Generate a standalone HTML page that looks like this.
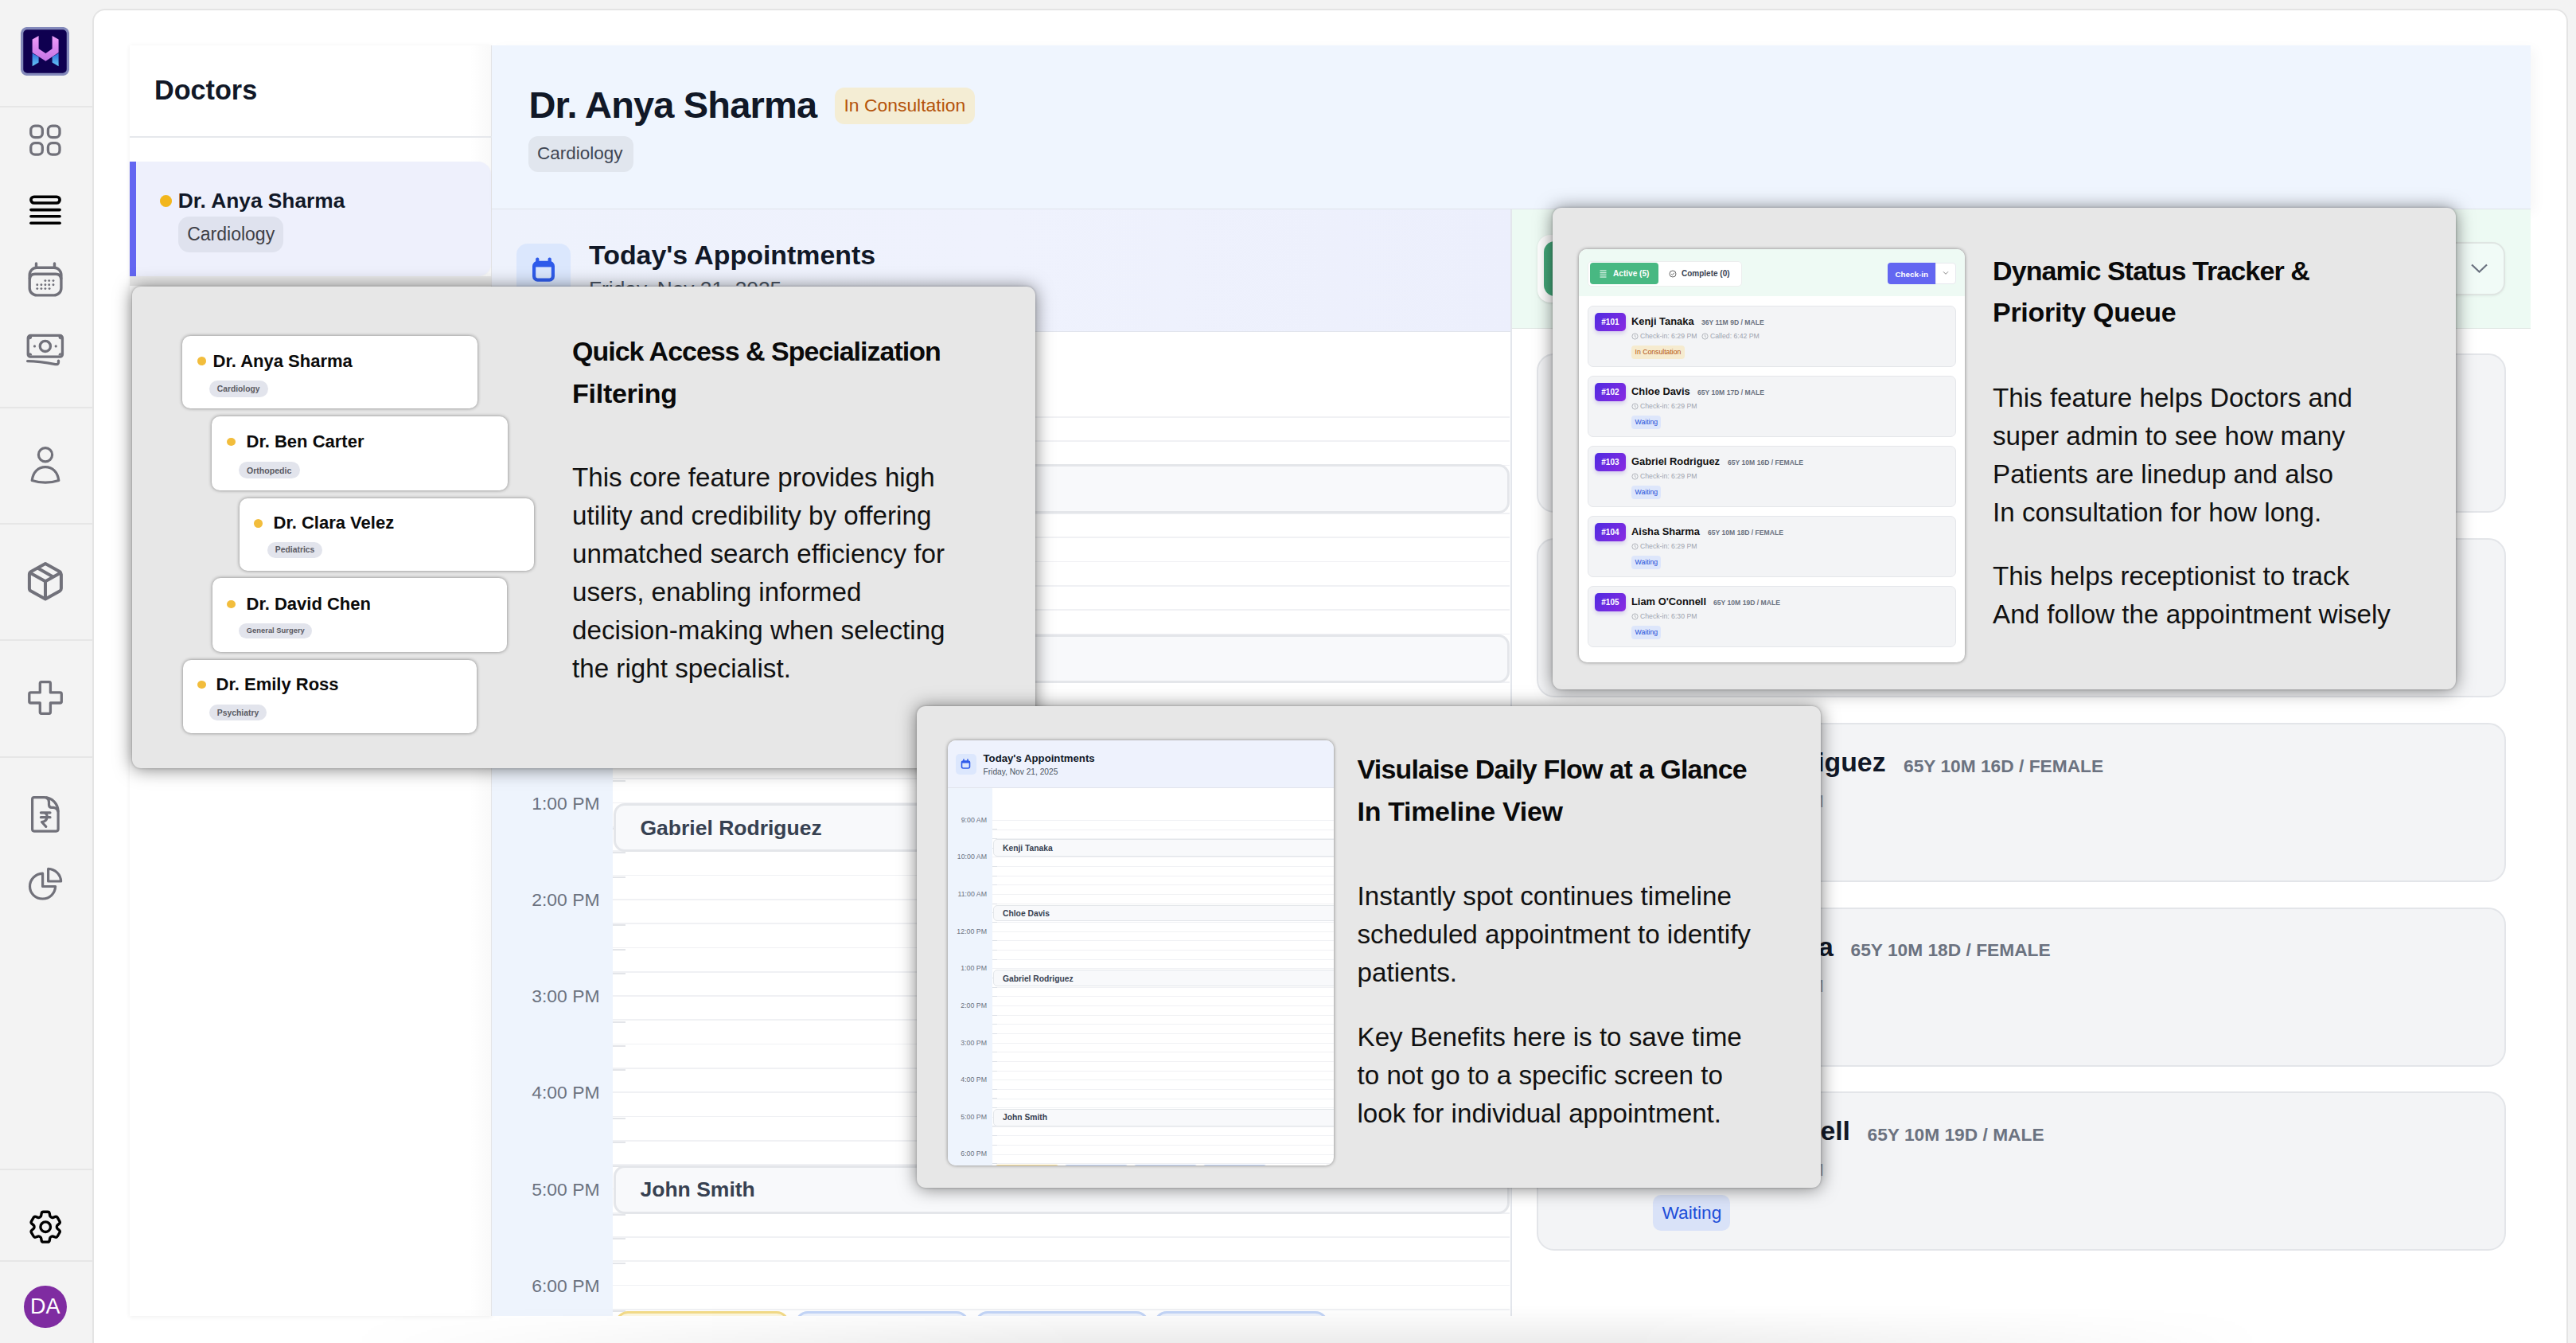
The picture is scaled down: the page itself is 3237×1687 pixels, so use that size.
<!DOCTYPE html><html><head><meta charset="utf-8"><style>
html,body{margin:0;padding:0;}
body{width:3237px;height:1687px;overflow:hidden;position:relative;background:#f3f3f3;font-family:"Liberation Sans",sans-serif;}
.a{position:absolute;box-sizing:border-box;}
.t{position:absolute;white-space:nowrap;line-height:1;}
</style></head><body>
<div class="a" style="left:0.0px;top:133.0px;width:116.0px;height:1.5px;background:#e6e6e6;"></div>
<div class="a" style="left:0.0px;top:511.0px;width:116.0px;height:1.5px;background:#e6e6e6;"></div>
<div class="a" style="left:0.0px;top:657.0px;width:116.0px;height:1.5px;background:#e6e6e6;"></div>
<div class="a" style="left:0.0px;top:803.0px;width:116.0px;height:1.5px;background:#e6e6e6;"></div>
<div class="a" style="left:0.0px;top:950.0px;width:116.0px;height:1.5px;background:#e6e6e6;"></div>
<div class="a" style="left:0.0px;top:1468.0px;width:116.0px;height:1.5px;background:#e6e6e6;"></div>
<div class="a" style="left:0.0px;top:1583.0px;width:116.0px;height:1.5px;background:#e6e6e6;"></div>
<svg class="a" style="left:26px;top:34px" width="61" height="61" viewBox="0 0 61 61">
<rect x="1.6" y="1.6" width="57.8" height="57.8" rx="6.5" fill="#0f0050" stroke="#8389ba" stroke-width="3.3"/>
<defs><linearGradient id="lb" x1="0" y1="0" x2="0" y2="1"><stop offset="0" stop-color="#2e6fdc"/><stop offset="1" stop-color="#66c6f4"/></linearGradient>
<linearGradient id="lp" x1="0" y1="0" x2="0" y2="1"><stop offset="0" stop-color="#ee9ff6"/><stop offset=".35" stop-color="#e08cf2"/><stop offset="1" stop-color="#c274e2"/></linearGradient></defs>
<polygon points="14.6,32.7 22.6,37.5 22.6,44.6 14.6,49.2" fill="url(#lb)"/>
<polygon points="47.6,32.7 39.6,37.5 39.6,44.6 47.6,49.2" fill="url(#lb)"/>
<polygon points="14.6,15.4 22.6,11 22.6,27.3 31.4,33 39.6,27.3 39.6,11 47.6,15.4 47.6,32.1 31.4,42.8 14.6,32.1" fill="url(#lp)"/>
</svg>
<svg class="a" style="left:35.0px;top:154.0px;" width="44" height="44" viewBox="0 0 44 44"><g fill="none" stroke="#71717a" stroke-width="3.3"><rect x="3.75" y="4.1" width="14.6" height="14.6" rx="5.2"/><rect x="25.4" y="4.1" width="14.6" height="14.6" rx="5.2"/><rect x="3.75" y="25.6" width="14.6" height="14.6" rx="5.2"/><rect x="25.4" y="25.6" width="14.6" height="14.6" rx="5.2"/></g></svg>
<svg class="a" style="left:35.0px;top:243.0px;" width="44" height="44" viewBox="0 0 44 44"><g fill="none" stroke="#000" stroke-width="3.6" stroke-linecap="round"><rect x="3.9" y="4.2" width="36.2" height="7.8" rx="3.9"/><line x1="3.9" y1="20.6" x2="40.1" y2="20.6"/><line x1="3.9" y1="28.8" x2="40.1" y2="28.8"/><line x1="3.9" y1="37.3" x2="40.1" y2="37.3"/></g></svg>
<svg class="a" style="left:33.0px;top:328.0px;" width="48" height="48" viewBox="0 0 48 48"><g fill="none" stroke="#71717a" stroke-width="3.4" stroke-linecap="round"><rect x="4.2" y="8.2" width="39.7" height="34.7" rx="9"/><path d="M4.4 22 Q5 16.2 11 16.2 H37 Q43 16.2 43.7 22"/><line x1="12.5" y1="3" x2="12.5" y2="8"/><line x1="35.5" y1="3" x2="35.5" y2="8"/></g><g fill="#71717a"><circle cx="23.9" cy="24.6" r="1.45"/><circle cx="28.7" cy="24.6" r="1.45"/><circle cx="34.0" cy="24.6" r="1.45"/><circle cx="13.8" cy="29.7" r="1.45"/><circle cx="18.9" cy="29.7" r="1.45"/><circle cx="23.9" cy="29.7" r="1.45"/><circle cx="28.7" cy="29.7" r="1.45"/><circle cx="34.0" cy="29.7" r="1.45"/><circle cx="13.8" cy="34.6" r="1.45"/><circle cx="18.9" cy="34.6" r="1.45"/><circle cx="23.9" cy="34.6" r="1.45"/><circle cx="29.1" cy="34.6" r="1.45"/></g></svg>
<svg class="a" style="left:32.0px;top:418.0px;" width="50" height="44" viewBox="0 0 50 44"><g fill="none" stroke="#71717a" stroke-width="3.3" stroke-linecap="round" stroke-linejoin="round"><rect x="3.25" y="3.45" width="43.2" height="26.7" rx="3"/><circle cx="24.85" cy="16.9" r="6.6"/><path d="M2.6 35.6 C 12 35.6 22 36.6 37.5 39.6 Q 41.5 40.3 41.5 37 V35.2"/></g><g fill="#71717a"><circle cx="11.5" cy="16.9" r="1.6"/><circle cx="38.2" cy="16.9" r="1.6"/><path d="M4.9 5.1 H8.2 A3.3 3.3 0 0 1 4.9 8.4 Z M44.8 5.1 H41.5 A3.3 3.3 0 0 0 44.8 8.4 Z M4.9 28.5 H8.2 A3.3 3.3 0 0 0 4.9 25.2 Z M44.8 28.5 H41.5 A3.3 3.3 0 0 1 44.8 25.2 Z"/></g></svg>
<svg class="a" style="left:36.0px;top:559.0px;" width="42" height="50" viewBox="0 0 42 50"><g fill="none" stroke="#71717a" stroke-width="3.2" stroke-linejoin="round"><circle cx="21" cy="12.3" r="8.6"/><path d="M4.2 44.5 C 5.5 34 12 27.6 21 27.6 C 30 27.6 36.5 34 37.8 44.5 C 27 48 15 48 4.2 44.5 Z"/></g></svg>
<svg class="a" style="left:33.0px;top:704.0px;" width="48" height="53" viewBox="0 0 48 53"><g fill="none" stroke="#71717a" stroke-width="4" stroke-linejoin="round"><path d="M24 4.1 L42 14 Q43.9 15.2 43.9 17.5 V35.3 Q43.9 37.5 42 38.6 L24 48.6 L6 38.6 Q3.9 37.5 3.9 35.3 V17.5 Q3.9 15.2 6 14 Z"/><path d="M4.6 15.5 L24 26.3 L43.2 15.5"/><line x1="24" y1="26.3" x2="24" y2="48.6"/><path d="M13.8 9.3 L33.5 20.4"/></g></svg>
<svg class="a" style="left:33.0px;top:853.0px;" width="48" height="48" viewBox="0 0 48 48"><path fill="none" stroke="#71717a" stroke-width="3.3" stroke-linejoin="round" d="M19 3.6 H28.7 Q30.4 3.6 30.4 5.4 V16.9 H42.5 Q44.3 16.9 44.3 18.7 V28.2 Q44.3 30 42.5 30 H30.4 V41.6 Q30.4 43.4 28.7 43.4 H19 Q17.3 43.4 17.3 41.6 V30 H5.6 Q3.8 30 3.8 28.2 V18.7 Q3.8 16.9 5.6 16.9 H17.3 V5.4 Q17.3 3.6 19 3.6 Z"/></svg>
<svg class="a" style="left:37.0px;top:998.0px;" width="40" height="50" viewBox="0 0 40 50"><g fill="none" stroke="#71717a" stroke-width="3.2" stroke-linejoin="round" stroke-linecap="round"><path d="M5.8 3.6 H18 C 29 3.6 36.1 12 36.1 22 V43.6 Q36.1 46.1 33.6 46.1 H5.8 Q3.6 46.1 3.6 43.6 V6 Q3.6 3.6 5.8 3.6 Z"/><path d="M21.5 4.2 Q24.5 5.5 24.5 9.5 V12.8 Q24.5 16.4 28 16.4 H30 Q34.3 16.6 35.8 21"/><path d="M14.4 22.8 H26 M14.4 28.7 H26 M17.8 22.8 C 24 23 24 33.6 15.5 34.5 L20.8 40.3"/></g></svg>
<svg class="a" style="left:34.0px;top:1087.0px;" width="46" height="46" viewBox="0 0 46 46"><g fill="none" stroke="#71717a" stroke-width="3.2" stroke-linejoin="round"><path d="M19.6 10.2 C 10.5 10.6 3.5 17.8 3.5 26.5 C 3.5 35.3 10.7 42 19.6 42 C 28.3 42 35.3 35.3 35.6 26.5 H19.6 Z"/><path d="M26.6 4.4 C 35.5 4.8 42.2 11.5 42.6 20 H26.6 Z"/></g></svg>
<svg class="a" style="left:31.6px;top:1515.7px;" width="50.4" height="50.4" viewBox="0 0 24 24"><g fill="none" stroke="#000" stroke-width="1.6" stroke-linecap="round" stroke-linejoin="round"><path d="M9.594 3.94c.09-.542.56-.94 1.11-.94h2.593c.55 0 1.02.398 1.11.94l.213 1.281c.063.374.313.686.645.87.074.04.147.083.22.127.325.196.72.257 1.075.124l1.217-.456a1.125 1.125 0 0 1 1.37.49l1.296 2.247a1.125 1.125 0 0 1-.26 1.431l-1.003.827c-.293.241-.438.613-.43.992a7.723 7.723 0 0 1 0 .255c-.008.378.137.75.43.991l1.004.827c.424.35.534.955.26 1.43l-1.298 2.247a1.125 1.125 0 0 1-1.369.491l-1.217-.456c-.355-.133-.75-.072-1.076.124a6.47 6.47 0 0 1-.22.128c-.331.183-.581.495-.644.869l-.213 1.281c-.09.543-.56.94-1.11.94h-2.594c-.55 0-1.019-.398-1.11-.94l-.213-1.281c-.062-.374-.312-.686-.644-.87a6.52 6.52 0 0 1-.22-.127c-.325-.196-.72-.257-1.076-.124l-1.217.456a1.125 1.125 0 0 1-1.369-.49l-1.297-2.247a1.125 1.125 0 0 1 .26-1.431l1.004-.827c.292-.24.437-.613.43-.991a6.932 6.932 0 0 1 0-.255c.007-.38-.138-.751-.43-.992l-1.004-.827a1.125 1.125 0 0 1-.26-1.43l1.297-2.247a1.125 1.125 0 0 1 1.37-.491l1.216.456c.356.133.751.072 1.076-.124.072-.044.146-.086.22-.128.332-.183.582-.495.644-.869l.214-1.28Z"/><path d="M15 12a3 3 0 1 1-6 0 3 3 0 0 1 6 0Z"/></g></svg>
<div class="a" style="left:30.2px;top:1614.6px;width:53.5px;height:53.5px;background:#7f2ca1;border-radius:50%;"></div>
<div class="t" style="left:38.0px;top:1627.9px;font-size:27px;font-weight:normal;color:#fff;">DA</div>
<div class="a" style="left:116.0px;top:10.5px;width:3111.0px;height:1749.5px;background:#fff;border-radius:16px;border:2px solid #e4e4e4;"></div>
<div class="a" style="left:163.0px;top:57.0px;width:455.0px;height:1596.0px;background:#fff;box-shadow:0 1px 6px rgba(0,0,0,0.07);"></div>
<div class="a" style="left:590.0px;top:57.0px;width:26.5px;height:1596.0px;background:linear-gradient(90deg,rgba(0,0,0,0),rgba(0,0,0,0.025));"></div>
<div class="a" style="left:616.5px;top:57.0px;width:2.0px;height:1596.0px;background:#e4e4e6;"></div>
<div class="t" style="left:194.0px;top:95.9px;font-size:34.2px;font-weight:bold;color:#111827;">Doctors</div>
<div class="a" style="left:163.0px;top:171.2px;width:455.0px;height:2.0px;background:#e6e8ec;"></div>
<div class="a" style="left:163.0px;top:203.0px;width:453.5px;height:144.0px;background:#eef0fc;border-radius:0 16px 16px 0;box-shadow:0 1px 3px rgba(0,0,0,0.04);"></div>
<div class="a" style="left:163.0px;top:203.0px;width:8.0px;height:144.0px;background:#6366f1;"></div>
<div class="a" style="left:200.8px;top:244.8px;width:15.5px;height:15.5px;background:#f2b61c;border-radius:50%;"></div>
<div class="t" style="left:223.8px;top:238.6px;font-size:26.3px;font-weight:bold;color:#111827;">Dr. Anya Sharma</div>
<div class="a" style="left:223.8px;top:271.6px;width:132.5px;height:45.0px;background:#dfe2ee;border-radius:14px;"></div>
<div class="t" style="left:235.2px;top:282.7px;font-size:23px;font-weight:normal;color:#3f3f46;">Cardiology</div>
<div class="a" style="left:618.0px;top:57.0px;width:2562.0px;height:206.0px;background:#eff5fe;border-bottom:1.5px solid #dfe3ea;box-shadow:6px 4px 14px rgba(0,0,0,0.035);"></div>
<div class="t" style="left:664.5px;top:108.3px;font-size:47px;font-weight:bold;color:#111827;letter-spacing:-0.85px;">Dr. Anya Sharma</div>
<div class="a" style="left:1049.4px;top:110.0px;width:175.6px;height:45.7px;background:#f4edd4;border-radius:12px;"></div>
<div class="t" style="left:1060.5px;top:121.1px;font-size:22.9px;font-weight:normal;color:#b45309;">In Consultation</div>
<div class="a" style="left:664.3px;top:171.0px;width:131.7px;height:45.0px;background:#e1e6ee;border-radius:12px;"></div>
<div class="t" style="left:675.0px;top:182.0px;font-size:22.5px;font-weight:normal;color:#3f4654;">Cardiology</div>
<div class="a" style="left:618.0px;top:263.0px;width:1281.0px;height:154.0px;background:linear-gradient(90deg,#eef2fc,#eff2fd 50%,#eceffc);border-bottom:1.5px solid #e1e4ec;"></div>
<div class="a" style="left:649.0px;top:306.0px;width:68.0px;height:68.0px;background:#dbe7fd;border-radius:14px;"></div>
<svg class="a" style="left:666.0px;top:321.0px;" width="34" height="36" viewBox="0 0 34 36"><g fill="none" stroke="#2f5bea" stroke-width="4.2" stroke-linecap="round"><rect x="5.1" y="8.8" width="23.8" height="21.8" rx="4.5"/><line x1="9.3" y1="4.5" x2="9.3" y2="8.8"/><line x1="24.7" y1="4.5" x2="24.7" y2="8.8"/></g><rect x="5.1" y="8.8" width="23.8" height="5.6" fill="#2f5bea"/></svg>
<div class="t" style="left:740.0px;top:303.8px;font-size:33.9px;font-weight:bold;color:#111827;">Today's Appointments</div>
<div class="t" style="left:740.0px;top:350.0px;font-size:26.3px;font-weight:normal;color:#4b5563;">Friday, Nov 21, 2025</div>
<div class="a" style="left:1898.0px;top:263.0px;width:2.0px;height:1390.0px;background:#e3e6ec;"></div>
<div class="a" style="left:618.0px;top:417.0px;width:152.0px;height:1236.0px;background:#eef4fd;"></div>
<div class="t" style="left:618px;width:135.5px;text-align:right;top:513.0px;font-size:22.9px;color:#6b7280;">9:00 AM</div>
<div class="t" style="left:618px;width:135.5px;text-align:right;top:634.2px;font-size:22.9px;color:#6b7280;">10:00 AM</div>
<div class="t" style="left:618px;width:135.5px;text-align:right;top:755.4px;font-size:22.9px;color:#6b7280;">11:00 AM</div>
<div class="t" style="left:618px;width:135.5px;text-align:right;top:876.6px;font-size:22.9px;color:#6b7280;">12:00 PM</div>
<div class="t" style="left:618px;width:135.5px;text-align:right;top:997.8px;font-size:22.9px;color:#6b7280;">1:00 PM</div>
<div class="t" style="left:618px;width:135.5px;text-align:right;top:1119.0px;font-size:22.9px;color:#6b7280;">2:00 PM</div>
<div class="t" style="left:618px;width:135.5px;text-align:right;top:1240.2px;font-size:22.9px;color:#6b7280;">3:00 PM</div>
<div class="t" style="left:618px;width:135.5px;text-align:right;top:1361.4px;font-size:22.9px;color:#6b7280;">4:00 PM</div>
<div class="t" style="left:618px;width:135.5px;text-align:right;top:1482.6px;font-size:22.9px;color:#6b7280;">5:00 PM</div>
<div class="t" style="left:618px;width:135.5px;text-align:right;top:1603.8px;font-size:22.9px;color:#6b7280;">6:00 PM</div>
<div class="a" style="left:770.0px;top:522.9px;width:1127.0px;height:1.8px;background:#f0f1f4;"></div>
<div class="a" style="left:770.0px;top:553.2px;width:1127.0px;height:1.8px;background:#f0f1f4;"></div>
<div class="a" style="left:770.0px;top:555.3px;width:15.5px;height:2.0px;background:#e3e5e9;"></div>
<div class="a" style="left:770.0px;top:583.5px;width:1127.0px;height:1.8px;background:#f0f1f4;"></div>
<div class="a" style="left:770.0px;top:585.6px;width:15.5px;height:2.0px;background:#e3e5e9;"></div>
<div class="a" style="left:770.0px;top:613.8px;width:1127.0px;height:1.8px;background:#f0f1f4;"></div>
<div class="a" style="left:770.0px;top:615.9px;width:15.5px;height:2.0px;background:#e3e5e9;"></div>
<div class="a" style="left:770.0px;top:644.1px;width:1127.0px;height:1.8px;background:#f0f1f4;"></div>
<div class="a" style="left:770.0px;top:674.4px;width:1127.0px;height:1.8px;background:#f0f1f4;"></div>
<div class="a" style="left:770.0px;top:676.5px;width:15.5px;height:2.0px;background:#e3e5e9;"></div>
<div class="a" style="left:770.0px;top:704.7px;width:1127.0px;height:1.8px;background:#f0f1f4;"></div>
<div class="a" style="left:770.0px;top:706.8px;width:15.5px;height:2.0px;background:#e3e5e9;"></div>
<div class="a" style="left:770.0px;top:735.0px;width:1127.0px;height:1.8px;background:#f0f1f4;"></div>
<div class="a" style="left:770.0px;top:737.1px;width:15.5px;height:2.0px;background:#e3e5e9;"></div>
<div class="a" style="left:770.0px;top:765.3px;width:1127.0px;height:1.8px;background:#f0f1f4;"></div>
<div class="a" style="left:770.0px;top:795.6px;width:1127.0px;height:1.8px;background:#f0f1f4;"></div>
<div class="a" style="left:770.0px;top:797.7px;width:15.5px;height:2.0px;background:#e3e5e9;"></div>
<div class="a" style="left:770.0px;top:825.9px;width:1127.0px;height:1.8px;background:#f0f1f4;"></div>
<div class="a" style="left:770.0px;top:828.0px;width:15.5px;height:2.0px;background:#e3e5e9;"></div>
<div class="a" style="left:770.0px;top:856.2px;width:1127.0px;height:1.8px;background:#f0f1f4;"></div>
<div class="a" style="left:770.0px;top:858.3px;width:15.5px;height:2.0px;background:#e3e5e9;"></div>
<div class="a" style="left:770.0px;top:886.5px;width:1127.0px;height:1.8px;background:#f0f1f4;"></div>
<div class="a" style="left:770.0px;top:916.8px;width:1127.0px;height:1.8px;background:#f0f1f4;"></div>
<div class="a" style="left:770.0px;top:918.9px;width:15.5px;height:2.0px;background:#e3e5e9;"></div>
<div class="a" style="left:770.0px;top:947.1px;width:1127.0px;height:1.8px;background:#f0f1f4;"></div>
<div class="a" style="left:770.0px;top:949.2px;width:15.5px;height:2.0px;background:#e3e5e9;"></div>
<div class="a" style="left:770.0px;top:977.4px;width:1127.0px;height:1.8px;background:#f0f1f4;"></div>
<div class="a" style="left:770.0px;top:979.5px;width:15.5px;height:2.0px;background:#e3e5e9;"></div>
<div class="a" style="left:770.0px;top:1007.7px;width:1127.0px;height:1.8px;background:#f0f1f4;"></div>
<div class="a" style="left:770.0px;top:1038.0px;width:1127.0px;height:1.8px;background:#f0f1f4;"></div>
<div class="a" style="left:770.0px;top:1040.1px;width:15.5px;height:2.0px;background:#e3e5e9;"></div>
<div class="a" style="left:770.0px;top:1068.3px;width:1127.0px;height:1.8px;background:#f0f1f4;"></div>
<div class="a" style="left:770.0px;top:1070.4px;width:15.5px;height:2.0px;background:#e3e5e9;"></div>
<div class="a" style="left:770.0px;top:1098.6px;width:1127.0px;height:1.8px;background:#f0f1f4;"></div>
<div class="a" style="left:770.0px;top:1100.7px;width:15.5px;height:2.0px;background:#e3e5e9;"></div>
<div class="a" style="left:770.0px;top:1128.9px;width:1127.0px;height:1.8px;background:#f0f1f4;"></div>
<div class="a" style="left:770.0px;top:1159.2px;width:1127.0px;height:1.8px;background:#f0f1f4;"></div>
<div class="a" style="left:770.0px;top:1161.3px;width:15.5px;height:2.0px;background:#e3e5e9;"></div>
<div class="a" style="left:770.0px;top:1189.5px;width:1127.0px;height:1.8px;background:#f0f1f4;"></div>
<div class="a" style="left:770.0px;top:1191.6px;width:15.5px;height:2.0px;background:#e3e5e9;"></div>
<div class="a" style="left:770.0px;top:1219.8px;width:1127.0px;height:1.8px;background:#f0f1f4;"></div>
<div class="a" style="left:770.0px;top:1221.9px;width:15.5px;height:2.0px;background:#e3e5e9;"></div>
<div class="a" style="left:770.0px;top:1250.1px;width:1127.0px;height:1.8px;background:#f0f1f4;"></div>
<div class="a" style="left:770.0px;top:1280.4px;width:1127.0px;height:1.8px;background:#f0f1f4;"></div>
<div class="a" style="left:770.0px;top:1282.5px;width:15.5px;height:2.0px;background:#e3e5e9;"></div>
<div class="a" style="left:770.0px;top:1310.7px;width:1127.0px;height:1.8px;background:#f0f1f4;"></div>
<div class="a" style="left:770.0px;top:1312.8px;width:15.5px;height:2.0px;background:#e3e5e9;"></div>
<div class="a" style="left:770.0px;top:1341.0px;width:1127.0px;height:1.8px;background:#f0f1f4;"></div>
<div class="a" style="left:770.0px;top:1343.1px;width:15.5px;height:2.0px;background:#e3e5e9;"></div>
<div class="a" style="left:770.0px;top:1371.3px;width:1127.0px;height:1.8px;background:#f0f1f4;"></div>
<div class="a" style="left:770.0px;top:1401.6px;width:1127.0px;height:1.8px;background:#f0f1f4;"></div>
<div class="a" style="left:770.0px;top:1403.7px;width:15.5px;height:2.0px;background:#e3e5e9;"></div>
<div class="a" style="left:770.0px;top:1431.9px;width:1127.0px;height:1.8px;background:#f0f1f4;"></div>
<div class="a" style="left:770.0px;top:1434.0px;width:15.5px;height:2.0px;background:#e3e5e9;"></div>
<div class="a" style="left:770.0px;top:1462.2px;width:1127.0px;height:1.8px;background:#f0f1f4;"></div>
<div class="a" style="left:770.0px;top:1464.3px;width:15.5px;height:2.0px;background:#e3e5e9;"></div>
<div class="a" style="left:770.0px;top:1492.5px;width:1127.0px;height:1.8px;background:#f0f1f4;"></div>
<div class="a" style="left:770.0px;top:1522.8px;width:1127.0px;height:1.8px;background:#f0f1f4;"></div>
<div class="a" style="left:770.0px;top:1524.9px;width:15.5px;height:2.0px;background:#e3e5e9;"></div>
<div class="a" style="left:770.0px;top:1553.1px;width:1127.0px;height:1.8px;background:#f0f1f4;"></div>
<div class="a" style="left:770.0px;top:1555.2px;width:15.5px;height:2.0px;background:#e3e5e9;"></div>
<div class="a" style="left:770.0px;top:1583.4px;width:1127.0px;height:1.8px;background:#f0f1f4;"></div>
<div class="a" style="left:770.0px;top:1585.5px;width:15.5px;height:2.0px;background:#e3e5e9;"></div>
<div class="a" style="left:770.0px;top:1613.7px;width:1127.0px;height:1.8px;background:#f0f1f4;"></div>
<div class="a" style="left:770.0px;top:1644.0px;width:1127.0px;height:1.8px;background:#f0f1f4;"></div>
<div class="a" style="left:770.0px;top:1646.1px;width:15.5px;height:2.0px;background:#e3e5e9;"></div>
<div class="a" style="left:770.7px;top:583.4px;width:1126.3px;height:61.4px;background:#f8f9fb;border:3px solid #e4e6ea;border-radius:14px;"></div>
<div class="t" style="left:804.5px;top:601.0px;font-size:26.5px;font-weight:bold;color:#374151;">Kenji Tanaka</div>
<div class="a" style="left:770.7px;top:796.7px;width:1126.3px;height:61.5px;background:#f8f9fb;border:3px solid #e4e6ea;border-radius:14px;"></div>
<div class="t" style="left:804.5px;top:814.3px;font-size:26.5px;font-weight:bold;color:#374151;">Chloe Davis</div>
<div class="a" style="left:770.7px;top:1009.0px;width:1126.3px;height:61.4px;background:#f8f9fb;border:3px solid #e4e6ea;border-radius:14px;"></div>
<div class="t" style="left:804.5px;top:1026.6px;font-size:26.5px;font-weight:bold;color:#374151;">Gabriel Rodriguez</div>
<div class="a" style="left:770.7px;top:1463.8px;width:1126.3px;height:61.6px;background:#f8f9fb;border:3px solid #e4e6ea;border-radius:14px;"></div>
<div class="t" style="left:804.5px;top:1481.4px;font-size:26.5px;font-weight:bold;color:#374151;">John Smith</div>
<div class="a" style="left:772px;top:1645px;width:1125px;height:8px;overflow:hidden;">
<div class="a" style="left:1.3px;top:1.5px;width:219px;height:40px;border:3px solid #f2da88;background:#fdf7de;border-radius:16px;"></div>
<div class="a" style="left:226.9px;top:1.5px;width:219px;height:40px;border:3px solid #c3d5f7;background:#eff4fd;border-radius:16px;"></div>
<div class="a" style="left:452.5px;top:1.5px;width:219px;height:40px;border:3px solid #c3d5f7;background:#eff4fd;border-radius:16px;"></div>
<div class="a" style="left:678.1px;top:1.5px;width:219px;height:40px;border:3px solid #c3d5f7;background:#eff4fd;border-radius:16px;"></div>
</div>
<div class="a" style="left:1900.0px;top:263.0px;width:1280.0px;height:149.5px;background:#edfaf3;border-bottom:1.5px solid #e0e6e3;"></div>
<div class="a" style="left:1931.7px;top:294.8px;width:563.3px;height:85.2px;background:#fff;border-radius:16px;box-shadow:0 1px 3px rgba(0,0,0,0.12);"></div>
<div class="a" style="left:1940.0px;top:303.4px;width:227.0px;height:68.6px;background:linear-gradient(90deg,#44a87a,#3c9a6c);border-radius:14px;"></div>
<div class="a" style="left:2900.0px;top:304.4px;width:248.0px;height:66.3px;background:#f1fbf7;border:2px solid #dfe5e2;border-radius:16px;box-shadow:0 1px 3px rgba(0,0,0,0.06);"></div>
<svg class="a" style="left:3104.0px;top:330.0px;" width="23" height="15" viewBox="0 0 23 15"><path d="M2 2.5 L11.5 11.5 L21 2.5" fill="none" stroke="#6b7280" stroke-width="2.2"/></svg>
<div class="a" style="left:1931.0px;top:444.4px;width:1218.4px;height:200.0px;background:#f3f4f6;border:2px solid #e3e5e9;border-radius:22px;"></div>
<div class="a" style="left:1955.0px;top:467.4px;width:103.0px;height:60.0px;background:linear-gradient(135deg,#4f2be0,#8b2be2);border-radius:14px;"></div>
<div class="t" style="left:2078.5px;top:477.8px;font-size:33.8px;font-weight:bold;color:#111827;">Kenji Tanaka</div>
<div class="t" style="left:2300.0px;top:487.1px;font-size:22.75px;font-weight:bold;color:#6b7280;">36Y 11M 9D / MALE</div>
<div class="t" style="left:2107.0px;top:532.4px;font-size:22.5px;font-weight:normal;color:#9ca3af;">Check-in: 6:29 PM</div>
<div class="a" style="left:2077.0px;top:574.4px;width:173.0px;height:45.0px;background:#f6ebcf;border-radius:10px;"></div>
<div class="t" style="left:2087.0px;top:587.7px;font-size:22.7px;font-weight:normal;color:#b45309;">In Consultation</div>
<div class="a" style="left:1931.0px;top:676.0px;width:1218.4px;height:200.0px;background:#f3f4f6;border:2px solid #e3e5e9;border-radius:22px;"></div>
<div class="a" style="left:1955.0px;top:699.0px;width:103.0px;height:60.0px;background:linear-gradient(135deg,#4f2be0,#8b2be2);border-radius:14px;"></div>
<div class="t" style="left:2078.5px;top:709.4px;font-size:33.8px;font-weight:bold;color:#111827;">Chloe Davis</div>
<div class="t" style="left:2300.0px;top:718.7px;font-size:22.75px;font-weight:bold;color:#6b7280;">65Y 10M 17D / MALE</div>
<div class="t" style="left:2107.0px;top:764.0px;font-size:22.5px;font-weight:normal;color:#9ca3af;">Check-in: 6:29 PM</div>
<div class="a" style="left:2077.0px;top:806.0px;width:96.5px;height:45.0px;background:#d9e2f8;border-radius:10px;"></div>
<div class="t" style="left:2088.5px;top:816.8px;font-size:22.7px;font-weight:normal;color:#1d4ed8;">Waiting</div>
<div class="a" style="left:1931.0px;top:908.0px;width:1218.4px;height:200.0px;background:#f3f4f6;border:2px solid #e3e5e9;border-radius:22px;"></div>
<div class="a" style="left:1955.0px;top:931.0px;width:103.0px;height:60.0px;background:linear-gradient(135deg,#4f2be0,#8b2be2);border-radius:14px;"></div>
<div class="t" style="left:2078.5px;top:941.4px;font-size:33.8px;font-weight:bold;color:#111827;">Gabriel Rodriguez</div>
<div class="t" style="left:2392.0px;top:950.7px;font-size:22.75px;font-weight:bold;color:#6b7280;">65Y 10M 16D / FEMALE</div>
<div class="t" style="left:2107.0px;top:996.0px;font-size:22.5px;font-weight:normal;color:#9ca3af;">Check-in: 6:29 PM</div>
<div class="a" style="left:2077.0px;top:1038.0px;width:96.5px;height:45.0px;background:#d9e2f8;border-radius:10px;"></div>
<div class="t" style="left:2088.5px;top:1048.8px;font-size:22.7px;font-weight:normal;color:#1d4ed8;">Waiting</div>
<div class="a" style="left:1931.0px;top:1139.5px;width:1218.4px;height:200.0px;background:#f3f4f6;border:2px solid #e3e5e9;border-radius:22px;"></div>
<div class="a" style="left:1955.0px;top:1162.5px;width:103.0px;height:60.0px;background:linear-gradient(135deg,#4f2be0,#8b2be2);border-radius:14px;"></div>
<div class="t" style="left:2078.5px;top:1172.9px;font-size:33.8px;font-weight:bold;color:#111827;">Aisha Sharma</div>
<div class="t" style="left:2325.5px;top:1182.2px;font-size:22.75px;font-weight:bold;color:#6b7280;">65Y 10M 18D / FEMALE</div>
<div class="t" style="left:2107.0px;top:1227.5px;font-size:22.5px;font-weight:normal;color:#9ca3af;">Check-in: 6:29 PM</div>
<div class="a" style="left:2077.0px;top:1269.5px;width:96.5px;height:45.0px;background:#d9e2f8;border-radius:10px;"></div>
<div class="t" style="left:2088.5px;top:1280.3px;font-size:22.7px;font-weight:normal;color:#1d4ed8;">Waiting</div>
<div class="a" style="left:1931.0px;top:1371.0px;width:1218.4px;height:200.0px;background:#f3f4f6;border:2px solid #e3e5e9;border-radius:22px;"></div>
<div class="a" style="left:1955.0px;top:1394.0px;width:103.0px;height:60.0px;background:linear-gradient(135deg,#4f2be0,#8b2be2);border-radius:14px;"></div>
<div class="t" style="left:2078.5px;top:1404.4px;font-size:33.8px;font-weight:bold;color:#111827;">Liam O'Connell</div>
<div class="t" style="left:2346.5px;top:1413.7px;font-size:22.75px;font-weight:bold;color:#6b7280;">65Y 10M 19D / MALE</div>
<div class="t" style="left:2107.0px;top:1459.0px;font-size:22.5px;font-weight:normal;color:#9ca3af;">Check-in: 6:30 PM</div>
<div class="a" style="left:2077.0px;top:1501.0px;width:96.5px;height:45.0px;background:#d9e2f8;border-radius:10px;"></div>
<div class="t" style="left:2088.5px;top:1511.8px;font-size:22.7px;font-weight:normal;color:#1d4ed8;">Waiting</div>
<div class="a" style="left:117.0px;top:1640.0px;width:3110.0px;height:47.0px;background:linear-gradient(180deg,rgba(0,0,0,0),rgba(0,0,0,0.075));-webkit-mask-image:linear-gradient(90deg,transparent 10%,#000 40%,#000 62%,transparent 88%);"></div>
<div class="a" style="left:163.0px;top:347.0px;width:454.0px;height:12.0px;background:#e9e9e9;"></div>
<div class="a" style="left:166.0px;top:360.0px;width:1135.0px;height:605.0px;background:#e7e7e7;border-radius:11px;box-shadow:0 1px 22px rgba(0,0,0,0.5),0 0 3px rgba(0,0,0,0.28);"></div>
<div class="a" style="left:229.0px;top:421.5px;width:370.5px;height:91.0px;background:#fff;border-radius:10px;box-shadow:0 0 4px rgba(0,0,0,0.45);"></div>
<div class="a" style="left:247.5px;top:448.3px;width:11.0px;height:10.4px;background:#f2bd3c;border-radius:50%;"></div>
<div class="t" style="left:267.5px;top:442.6px;font-size:22px;font-weight:bold;color:#0b0b0b;letter-spacing:0px;">Dr. Anya Sharma</div>
<div class="a" style="left:263.0px;top:478.0px;width:73.5px;height:21.0px;background:#e2e4ec;border-radius:11px;"></div>
<div class="t" style="left:272.8px;top:484.1px;font-size:10.27px;font-weight:bold;color:#5b5b63;">Cardiology</div>
<div class="a" style="left:266.0px;top:523.0px;width:371.5px;height:93.0px;background:#fff;border-radius:10px;box-shadow:0 0 4px rgba(0,0,0,0.45);"></div>
<div class="a" style="left:284.8px;top:549.8px;width:11.0px;height:10.4px;background:#f2bd3c;border-radius:50%;"></div>
<div class="t" style="left:309.5px;top:544.4px;font-size:22px;font-weight:bold;color:#0b0b0b;letter-spacing:0px;">Dr. Ben Carter</div>
<div class="a" style="left:300.0px;top:580.0px;width:76.8px;height:20.7px;background:#e2e4ec;border-radius:11px;"></div>
<div class="t" style="left:310.0px;top:585.6px;font-size:10.56px;font-weight:bold;color:#5b5b63;">Orthopedic</div>
<div class="a" style="left:300.8px;top:625.5px;width:370.2px;height:91.5px;background:#fff;border-radius:10px;box-shadow:0 0 4px rgba(0,0,0,0.45);"></div>
<div class="a" style="left:319.3px;top:652.2px;width:11.0px;height:10.4px;background:#f2bd3c;border-radius:50%;"></div>
<div class="t" style="left:343.5px;top:646.4px;font-size:22px;font-weight:bold;color:#0b0b0b;letter-spacing:0px;">Dr. Clara Velez</div>
<div class="a" style="left:335.9px;top:681.2px;width:69.5px;height:20.1px;background:#e2e4ec;border-radius:11px;"></div>
<div class="t" style="left:345.8px;top:686.3px;font-size:10.36px;font-weight:bold;color:#5b5b63;">Pediatrics</div>
<div class="a" style="left:266.5px;top:726.0px;width:370.5px;height:93.0px;background:#fff;border-radius:10px;box-shadow:0 0 4px rgba(0,0,0,0.45);"></div>
<div class="a" style="left:285.1px;top:754.1px;width:11.0px;height:10.4px;background:#f2bd3c;border-radius:50%;"></div>
<div class="t" style="left:309.5px;top:747.7px;font-size:22px;font-weight:bold;color:#0b0b0b;letter-spacing:0px;">Dr. David Chen</div>
<div class="a" style="left:300.2px;top:783.3px;width:92.2px;height:19.2px;background:#e2e4ec;border-radius:11px;"></div>
<div class="t" style="left:309.8px;top:788.4px;font-size:9.38px;font-weight:bold;color:#5b5b63;">General Surgery</div>
<div class="a" style="left:230.0px;top:828.6px;width:369.0px;height:92.4px;background:#fff;border-radius:10px;box-shadow:0 0 4px rgba(0,0,0,0.45);"></div>
<div class="a" style="left:248.0px;top:854.5px;width:11.0px;height:10.4px;background:#f2bd3c;border-radius:50%;"></div>
<div class="t" style="left:271.5px;top:848.7px;font-size:22px;font-weight:bold;color:#0b0b0b;letter-spacing:0px;">Dr. Emily Ross</div>
<div class="a" style="left:263.2px;top:885.2px;width:71.5px;height:20.3px;background:#e2e4ec;border-radius:11px;"></div>
<div class="t" style="left:272.8px;top:890.5px;font-size:10.36px;font-weight:bold;color:#5b5b63;">Psychiatry</div>
<div class="t" style="left:719.0px;top:423.7px;font-size:34px;font-weight:bold;color:#0a0a0a;letter-spacing:-1.01px;">Quick Access &amp; Specialization</div>
<div class="t" style="left:719.0px;top:476.6px;font-size:34px;font-weight:bold;color:#0a0a0a;letter-spacing:-0.26px;">Filtering</div>
<div class="t" style="left:719.0px;top:582.8px;font-size:33.2px;font-weight:normal;color:#111;">This core feature provides high</div>
<div class="t" style="left:719.0px;top:630.8px;font-size:33.2px;font-weight:normal;color:#111;">utility and credibility by offering</div>
<div class="t" style="left:719.0px;top:678.8px;font-size:33.2px;font-weight:normal;color:#111;">unmatched search efficiency for</div>
<div class="t" style="left:719.0px;top:726.8px;font-size:33.2px;font-weight:normal;color:#111;">users, enabling informed</div>
<div class="t" style="left:719.0px;top:774.8px;font-size:33.2px;font-weight:normal;color:#111;">decision-making when selecting</div>
<div class="t" style="left:719.0px;top:822.8px;font-size:33.2px;font-weight:normal;color:#111;">the right specialist.</div>
<div class="a" style="left:1951.0px;top:261.0px;width:1135.0px;height:605.0px;background:#e7e7e7;border-radius:11px;box-shadow:0 1px 22px rgba(0,0,0,0.5),0 0 3px rgba(0,0,0,0.28);"></div>
<div class="a" style="left:1984.0px;top:313.0px;width:485.0px;height:518.6px;background:#fff;border-radius:10px;box-shadow:0 0 4px rgba(0,0,0,0.45);overflow:hidden;">
<div class="a" style="left:0.0px;top:0.0px;width:485.0px;height:59.0px;background:#eefaf4;"></div>
<div class="a" style="left:11.0px;top:15.0px;width:194.0px;height:31.6px;background:#fff;border:1px solid #eceeee;border-radius:5px;"></div>
<div class="a" style="left:14.0px;top:17.0px;width:86.0px;height:26.6px;background:#48b882;border-radius:4px;"></div>
<svg class="a" style="left:26px;top:25.5px" width="9" height="10" viewBox="0 0 9 10"><g stroke="#fff" stroke-width="1.1"><line x1="0.5" y1="1" x2="8.5" y2="1"/><line x1="0.5" y1="3.7" x2="8.5" y2="3.7"/><line x1="0.5" y1="6.3" x2="8.5" y2="6.3"/><line x1="0.5" y1="9" x2="8.5" y2="9"/></g></svg>
<div class="t" style="left:43.0px;top:26.0px;font-size:10.1px;font-weight:bold;color:#fff;">Active (5)</div>
<svg class="a" style="left:113px;top:25.5px" width="10" height="10" viewBox="0 0 10 10"><circle cx="5" cy="5" r="4" fill="none" stroke="#555" stroke-width="0.9"/><path d="M3.2 5.2 L4.5 6.4 L6.8 3.8" fill="none" stroke="#555" stroke-width="0.9"/></svg>
<div class="t" style="left:129.0px;top:26.0px;font-size:10.0px;font-weight:bold;color:#3a4250;">Complete (0)</div>
<div class="a" style="left:388.0px;top:17.0px;width:61.0px;height:26.6px;background:#6366f1;border-radius:4px 0 0 4px;"></div>
<div class="t" style="left:397.4px;top:26.6px;font-size:9.9px;font-weight:bold;color:#fff;">Check-in</div>
<div class="a" style="left:448.0px;top:17.0px;width:26.0px;height:26.6px;background:#fff;border:1px solid #e7e9ee;border-radius:0 4px 4px 0;"></div>
<svg class="a" style="left:457px;top:27px" width="8" height="6" viewBox="0 0 8 6"><path d="M1 1.3 L4 4.3 L7 1.3" fill="none" stroke="#777" stroke-width="0.9"/></svg>
<div class="a" style="left:11.0px;top:71.0px;width:463.0px;height:76.5px;background:#f3f4f6;border:1px solid #e4e6ea;border-radius:7px;"></div>
<div class="a" style="left:20.0px;top:80.0px;width:39.0px;height:23.0px;background:linear-gradient(135deg,#4f2be0,#8b2be2);border-radius:5px;box-shadow:0 3px 5px rgba(80,40,200,0.18);"></div>
<div class="t" style="left:28.3px;top:87.1px;font-size:10px;font-weight:bold;color:#fff;">#101</div>
<div class="t" style="left:66.0px;top:84.6px;font-size:12.9px;font-weight:bold;color:#111;">Kenji Tanaka</div>
<div class="t" style="left:154.0px;top:88.2px;font-size:8.6px;font-weight:bold;color:#6b7280;">36Y 11M 9D / MALE</div>
<svg class="a" style="left:66px;top:105px" width="9" height="9" viewBox="0 0 9 9"><circle cx="4.5" cy="4.5" r="3.6" fill="none" stroke="#a3a8b0" stroke-width="0.8"/><path d="M4.5 2.4 V4.7 L6 5.6" fill="none" stroke="#a3a8b0" stroke-width="0.8"/></svg>
<div class="t" style="left:77.0px;top:105.1px;font-size:8.7px;font-weight:normal;color:#9ca3af;">Check-in: 6:29 PM</div>
<svg class="a" style="left:154px;top:105px" width="9" height="9" viewBox="0 0 9 9"><circle cx="4.5" cy="4.5" r="3.6" fill="none" stroke="#a3a8b0" stroke-width="0.8"/><path d="M4.5 2.4 V4.7 L6 5.6" fill="none" stroke="#a3a8b0" stroke-width="0.8"/></svg>
<div class="t" style="left:165.0px;top:105.1px;font-size:8.7px;font-weight:normal;color:#9ca3af;">Called: 6:42 PM</div>
<div class="a" style="left:66.0px;top:121.0px;width:66.5px;height:16.5px;background:#f6ebcf;border-radius:4px;"></div>
<div class="t" style="left:70.5px;top:125.1px;font-size:8.7px;font-weight:normal;color:#b45309;">In Consultation</div>
<div class="a" style="left:11.0px;top:159.0px;width:463.0px;height:76.5px;background:#f3f4f6;border:1px solid #e4e6ea;border-radius:7px;"></div>
<div class="a" style="left:20.0px;top:168.0px;width:39.0px;height:23.0px;background:linear-gradient(135deg,#4f2be0,#8b2be2);border-radius:5px;box-shadow:0 3px 5px rgba(80,40,200,0.18);"></div>
<div class="t" style="left:28.3px;top:175.1px;font-size:10px;font-weight:bold;color:#fff;">#102</div>
<div class="t" style="left:66.0px;top:172.6px;font-size:12.9px;font-weight:bold;color:#111;">Chloe Davis</div>
<div class="t" style="left:149.0px;top:176.2px;font-size:8.6px;font-weight:bold;color:#6b7280;">65Y 10M 17D / MALE</div>
<svg class="a" style="left:66px;top:193px" width="9" height="9" viewBox="0 0 9 9"><circle cx="4.5" cy="4.5" r="3.6" fill="none" stroke="#a3a8b0" stroke-width="0.8"/><path d="M4.5 2.4 V4.7 L6 5.6" fill="none" stroke="#a3a8b0" stroke-width="0.8"/></svg>
<div class="t" style="left:77.0px;top:193.1px;font-size:8.7px;font-weight:normal;color:#9ca3af;">Check-in: 6:29 PM</div>
<div class="a" style="left:66.0px;top:209.0px;width:37.0px;height:16.5px;background:#dde6fb;border-radius:4px;"></div>
<div class="t" style="left:70.5px;top:213.1px;font-size:8.7px;font-weight:normal;color:#1d4ed8;">Waiting</div>
<div class="a" style="left:11.0px;top:247.0px;width:463.0px;height:76.5px;background:#f3f4f6;border:1px solid #e4e6ea;border-radius:7px;"></div>
<div class="a" style="left:20.0px;top:256.0px;width:39.0px;height:23.0px;background:linear-gradient(135deg,#4f2be0,#8b2be2);border-radius:5px;box-shadow:0 3px 5px rgba(80,40,200,0.18);"></div>
<div class="t" style="left:28.3px;top:263.1px;font-size:10px;font-weight:bold;color:#fff;">#103</div>
<div class="t" style="left:66.0px;top:260.6px;font-size:12.9px;font-weight:bold;color:#111;">Gabriel Rodriguez</div>
<div class="t" style="left:187.0px;top:264.2px;font-size:8.6px;font-weight:bold;color:#6b7280;">65Y 10M 16D / FEMALE</div>
<svg class="a" style="left:66px;top:281px" width="9" height="9" viewBox="0 0 9 9"><circle cx="4.5" cy="4.5" r="3.6" fill="none" stroke="#a3a8b0" stroke-width="0.8"/><path d="M4.5 2.4 V4.7 L6 5.6" fill="none" stroke="#a3a8b0" stroke-width="0.8"/></svg>
<div class="t" style="left:77.0px;top:281.1px;font-size:8.7px;font-weight:normal;color:#9ca3af;">Check-in: 6:29 PM</div>
<div class="a" style="left:66.0px;top:297.0px;width:37.0px;height:16.5px;background:#dde6fb;border-radius:4px;"></div>
<div class="t" style="left:70.5px;top:301.1px;font-size:8.7px;font-weight:normal;color:#1d4ed8;">Waiting</div>
<div class="a" style="left:11.0px;top:335.0px;width:463.0px;height:76.5px;background:#f3f4f6;border:1px solid #e4e6ea;border-radius:7px;"></div>
<div class="a" style="left:20.0px;top:344.0px;width:39.0px;height:23.0px;background:linear-gradient(135deg,#4f2be0,#8b2be2);border-radius:5px;box-shadow:0 3px 5px rgba(80,40,200,0.18);"></div>
<div class="t" style="left:28.3px;top:351.1px;font-size:10px;font-weight:bold;color:#fff;">#104</div>
<div class="t" style="left:66.0px;top:348.6px;font-size:12.9px;font-weight:bold;color:#111;">Aisha Sharma</div>
<div class="t" style="left:162.0px;top:352.2px;font-size:8.6px;font-weight:bold;color:#6b7280;">65Y 10M 18D / FEMALE</div>
<svg class="a" style="left:66px;top:369px" width="9" height="9" viewBox="0 0 9 9"><circle cx="4.5" cy="4.5" r="3.6" fill="none" stroke="#a3a8b0" stroke-width="0.8"/><path d="M4.5 2.4 V4.7 L6 5.6" fill="none" stroke="#a3a8b0" stroke-width="0.8"/></svg>
<div class="t" style="left:77.0px;top:369.1px;font-size:8.7px;font-weight:normal;color:#9ca3af;">Check-in: 6:29 PM</div>
<div class="a" style="left:66.0px;top:385.0px;width:37.0px;height:16.5px;background:#dde6fb;border-radius:4px;"></div>
<div class="t" style="left:70.5px;top:389.1px;font-size:8.7px;font-weight:normal;color:#1d4ed8;">Waiting</div>
<div class="a" style="left:11.0px;top:423.0px;width:463.0px;height:76.5px;background:#f3f4f6;border:1px solid #e4e6ea;border-radius:7px;"></div>
<div class="a" style="left:20.0px;top:432.0px;width:39.0px;height:23.0px;background:linear-gradient(135deg,#4f2be0,#8b2be2);border-radius:5px;box-shadow:0 3px 5px rgba(80,40,200,0.18);"></div>
<div class="t" style="left:28.3px;top:439.1px;font-size:10px;font-weight:bold;color:#fff;">#105</div>
<div class="t" style="left:66.0px;top:436.6px;font-size:12.9px;font-weight:bold;color:#111;">Liam O'Connell</div>
<div class="t" style="left:169.0px;top:440.2px;font-size:8.6px;font-weight:bold;color:#6b7280;">65Y 10M 19D / MALE</div>
<svg class="a" style="left:66px;top:457px" width="9" height="9" viewBox="0 0 9 9"><circle cx="4.5" cy="4.5" r="3.6" fill="none" stroke="#a3a8b0" stroke-width="0.8"/><path d="M4.5 2.4 V4.7 L6 5.6" fill="none" stroke="#a3a8b0" stroke-width="0.8"/></svg>
<div class="t" style="left:77.0px;top:457.1px;font-size:8.7px;font-weight:normal;color:#9ca3af;">Check-in: 6:30 PM</div>
<div class="a" style="left:66.0px;top:473.0px;width:37.0px;height:16.5px;background:#dde6fb;border-radius:4px;"></div>
<div class="t" style="left:70.5px;top:477.1px;font-size:8.7px;font-weight:normal;color:#1d4ed8;">Waiting</div>
</div>
<div class="t" style="left:2504.0px;top:322.7px;font-size:34px;font-weight:bold;color:#0a0a0a;letter-spacing:-0.9px;">Dynamic Status Tracker &amp;</div>
<div class="t" style="left:2504.0px;top:375.2px;font-size:34px;font-weight:bold;color:#0a0a0a;letter-spacing:-0.27px;">Priority Queue</div>
<div class="t" style="left:2504.0px;top:483.3px;font-size:33.2px;font-weight:normal;color:#111;">This feature helps Doctors and</div>
<div class="t" style="left:2504.0px;top:531.3px;font-size:33.2px;font-weight:normal;color:#111;">super admin to see how many</div>
<div class="t" style="left:2504.0px;top:579.3px;font-size:33.2px;font-weight:normal;color:#111;">Patients are linedup and also</div>
<div class="t" style="left:2504.0px;top:627.3px;font-size:33.2px;font-weight:normal;color:#111;">In consultation for how long.</div>
<div class="t" style="left:2504.0px;top:706.9px;font-size:33.2px;font-weight:normal;color:#111;">This helps receptionist to track</div>
<div class="t" style="left:2504.0px;top:754.9px;font-size:33.2px;font-weight:normal;color:#111;">And follow the appointment wisely</div>
<div class="a" style="left:1152.0px;top:887.0px;width:1136.0px;height:605.0px;background:#e7e7e7;border-radius:11px;box-shadow:0 1px 22px rgba(0,0,0,0.5),0 0 3px rgba(0,0,0,0.28);"></div>
<div class="a" style="left:1191.0px;top:930.0px;width:485.0px;height:534.0px;background:#fff;border-radius:10px;box-shadow:0 0 4px rgba(0,0,0,0.45);overflow:hidden;">
<div class="a" style="left:0.0px;top:0.0px;width:485.0px;height:60.0px;background:#eef2fd;border-bottom:1px solid #e1e4ec;"></div>
<div class="a" style="left:9.7px;top:17.0px;width:26.0px;height:25.7px;background:#dce7fd;border-radius:5px;"></div>
<svg class="a" style="left:16px;top:22.5px" width="13" height="13" viewBox="0 0 13 13"><g fill="none" stroke="#2f5bea" stroke-width="1.6" stroke-linecap="round"><rect x="1.5" y="3" width="10" height="9" rx="2"/><line x1="4" y1="1" x2="4" y2="3"/><line x1="9" y1="1" x2="9" y2="3"/></g><rect x="1.5" y="3" width="10" height="2.5" fill="#2f5bea"/></svg>
<div class="t" style="left:44.5px;top:16.0px;font-size:13.2px;font-weight:bold;color:#111827;">Today's Appointments</div>
<div class="t" style="left:44.5px;top:35.1px;font-size:10.2px;font-weight:normal;color:#4b5563;">Friday, Nov 21, 2025</div>
<div class="a" style="left:0.0px;top:60.0px;width:56.0px;height:474.0px;background:#eef4fd;"></div>
<div class="t" style="left:0px;width:49px;text-align:right;top:95.7px;font-size:8.8px;color:#6b7280;">9:00 AM</div>
<div class="t" style="left:0px;width:49px;text-align:right;top:142.3px;font-size:8.8px;color:#6b7280;">10:00 AM</div>
<div class="t" style="left:0px;width:49px;text-align:right;top:189.0px;font-size:8.8px;color:#6b7280;">11:00 AM</div>
<div class="t" style="left:0px;width:49px;text-align:right;top:235.6px;font-size:8.8px;color:#6b7280;">12:00 PM</div>
<div class="t" style="left:0px;width:49px;text-align:right;top:282.2px;font-size:8.8px;color:#6b7280;">1:00 PM</div>
<div class="t" style="left:0px;width:49px;text-align:right;top:328.9px;font-size:8.8px;color:#6b7280;">2:00 PM</div>
<div class="t" style="left:0px;width:49px;text-align:right;top:375.5px;font-size:8.8px;color:#6b7280;">3:00 PM</div>
<div class="t" style="left:0px;width:49px;text-align:right;top:422.1px;font-size:8.8px;color:#6b7280;">4:00 PM</div>
<div class="t" style="left:0px;width:49px;text-align:right;top:468.7px;font-size:8.8px;color:#6b7280;">5:00 PM</div>
<div class="t" style="left:0px;width:49px;text-align:right;top:515.4px;font-size:8.8px;color:#6b7280;">6:00 PM</div>
<div class="a" style="left:56.0px;top:99.8px;width:429.0px;height:0.8px;background:#f0f1f4;"></div>
<div class="a" style="left:56.0px;top:111.5px;width:429.0px;height:0.8px;background:#f0f1f4;"></div>
<div class="a" style="left:56.0px;top:111.4px;width:6.0px;height:1.0px;background:#dde1e7;"></div>
<div class="a" style="left:56.0px;top:123.1px;width:429.0px;height:0.8px;background:#f0f1f4;"></div>
<div class="a" style="left:56.0px;top:123.0px;width:6.0px;height:1.0px;background:#dde1e7;"></div>
<div class="a" style="left:56.0px;top:134.8px;width:429.0px;height:0.8px;background:#f0f1f4;"></div>
<div class="a" style="left:56.0px;top:134.7px;width:6.0px;height:1.0px;background:#dde1e7;"></div>
<div class="a" style="left:56.0px;top:146.4px;width:429.0px;height:0.8px;background:#f0f1f4;"></div>
<div class="a" style="left:56.0px;top:158.1px;width:429.0px;height:0.8px;background:#f0f1f4;"></div>
<div class="a" style="left:56.0px;top:158.0px;width:6.0px;height:1.0px;background:#dde1e7;"></div>
<div class="a" style="left:56.0px;top:169.7px;width:429.0px;height:0.8px;background:#f0f1f4;"></div>
<div class="a" style="left:56.0px;top:169.6px;width:6.0px;height:1.0px;background:#dde1e7;"></div>
<div class="a" style="left:56.0px;top:181.4px;width:429.0px;height:0.8px;background:#f0f1f4;"></div>
<div class="a" style="left:56.0px;top:181.3px;width:6.0px;height:1.0px;background:#dde1e7;"></div>
<div class="a" style="left:56.0px;top:193.1px;width:429.0px;height:0.8px;background:#f0f1f4;"></div>
<div class="a" style="left:56.0px;top:204.7px;width:429.0px;height:0.8px;background:#f0f1f4;"></div>
<div class="a" style="left:56.0px;top:204.6px;width:6.0px;height:1.0px;background:#dde1e7;"></div>
<div class="a" style="left:56.0px;top:216.4px;width:429.0px;height:0.8px;background:#f0f1f4;"></div>
<div class="a" style="left:56.0px;top:216.3px;width:6.0px;height:1.0px;background:#dde1e7;"></div>
<div class="a" style="left:56.0px;top:228.0px;width:429.0px;height:0.8px;background:#f0f1f4;"></div>
<div class="a" style="left:56.0px;top:227.9px;width:6.0px;height:1.0px;background:#dde1e7;"></div>
<div class="a" style="left:56.0px;top:239.7px;width:429.0px;height:0.8px;background:#f0f1f4;"></div>
<div class="a" style="left:56.0px;top:251.3px;width:429.0px;height:0.8px;background:#f0f1f4;"></div>
<div class="a" style="left:56.0px;top:251.2px;width:6.0px;height:1.0px;background:#dde1e7;"></div>
<div class="a" style="left:56.0px;top:263.0px;width:429.0px;height:0.8px;background:#f0f1f4;"></div>
<div class="a" style="left:56.0px;top:262.9px;width:6.0px;height:1.0px;background:#dde1e7;"></div>
<div class="a" style="left:56.0px;top:274.7px;width:429.0px;height:0.8px;background:#f0f1f4;"></div>
<div class="a" style="left:56.0px;top:274.6px;width:6.0px;height:1.0px;background:#dde1e7;"></div>
<div class="a" style="left:56.0px;top:286.3px;width:429.0px;height:0.8px;background:#f0f1f4;"></div>
<div class="a" style="left:56.0px;top:298.0px;width:429.0px;height:0.8px;background:#f0f1f4;"></div>
<div class="a" style="left:56.0px;top:297.9px;width:6.0px;height:1.0px;background:#dde1e7;"></div>
<div class="a" style="left:56.0px;top:309.6px;width:429.0px;height:0.8px;background:#f0f1f4;"></div>
<div class="a" style="left:56.0px;top:309.5px;width:6.0px;height:1.0px;background:#dde1e7;"></div>
<div class="a" style="left:56.0px;top:321.3px;width:429.0px;height:0.8px;background:#f0f1f4;"></div>
<div class="a" style="left:56.0px;top:321.2px;width:6.0px;height:1.0px;background:#dde1e7;"></div>
<div class="a" style="left:56.0px;top:333.0px;width:429.0px;height:0.8px;background:#f0f1f4;"></div>
<div class="a" style="left:56.0px;top:344.6px;width:429.0px;height:0.8px;background:#f0f1f4;"></div>
<div class="a" style="left:56.0px;top:344.5px;width:6.0px;height:1.0px;background:#dde1e7;"></div>
<div class="a" style="left:56.0px;top:356.3px;width:429.0px;height:0.8px;background:#f0f1f4;"></div>
<div class="a" style="left:56.0px;top:356.2px;width:6.0px;height:1.0px;background:#dde1e7;"></div>
<div class="a" style="left:56.0px;top:367.9px;width:429.0px;height:0.8px;background:#f0f1f4;"></div>
<div class="a" style="left:56.0px;top:367.8px;width:6.0px;height:1.0px;background:#dde1e7;"></div>
<div class="a" style="left:56.0px;top:379.6px;width:429.0px;height:0.8px;background:#f0f1f4;"></div>
<div class="a" style="left:56.0px;top:391.2px;width:429.0px;height:0.8px;background:#f0f1f4;"></div>
<div class="a" style="left:56.0px;top:391.1px;width:6.0px;height:1.0px;background:#dde1e7;"></div>
<div class="a" style="left:56.0px;top:402.9px;width:429.0px;height:0.8px;background:#f0f1f4;"></div>
<div class="a" style="left:56.0px;top:402.8px;width:6.0px;height:1.0px;background:#dde1e7;"></div>
<div class="a" style="left:56.0px;top:414.6px;width:429.0px;height:0.8px;background:#f0f1f4;"></div>
<div class="a" style="left:56.0px;top:414.5px;width:6.0px;height:1.0px;background:#dde1e7;"></div>
<div class="a" style="left:56.0px;top:426.2px;width:429.0px;height:0.8px;background:#f0f1f4;"></div>
<div class="a" style="left:56.0px;top:437.9px;width:429.0px;height:0.8px;background:#f0f1f4;"></div>
<div class="a" style="left:56.0px;top:437.8px;width:6.0px;height:1.0px;background:#dde1e7;"></div>
<div class="a" style="left:56.0px;top:449.5px;width:429.0px;height:0.8px;background:#f0f1f4;"></div>
<div class="a" style="left:56.0px;top:449.4px;width:6.0px;height:1.0px;background:#dde1e7;"></div>
<div class="a" style="left:56.0px;top:461.2px;width:429.0px;height:0.8px;background:#f0f1f4;"></div>
<div class="a" style="left:56.0px;top:461.1px;width:6.0px;height:1.0px;background:#dde1e7;"></div>
<div class="a" style="left:56.0px;top:472.8px;width:429.0px;height:0.8px;background:#f0f1f4;"></div>
<div class="a" style="left:56.0px;top:484.5px;width:429.0px;height:0.8px;background:#f0f1f4;"></div>
<div class="a" style="left:56.0px;top:484.4px;width:6.0px;height:1.0px;background:#dde1e7;"></div>
<div class="a" style="left:56.0px;top:496.2px;width:429.0px;height:0.8px;background:#f0f1f4;"></div>
<div class="a" style="left:56.0px;top:496.1px;width:6.0px;height:1.0px;background:#dde1e7;"></div>
<div class="a" style="left:56.0px;top:507.8px;width:429.0px;height:0.8px;background:#f0f1f4;"></div>
<div class="a" style="left:56.0px;top:507.7px;width:6.0px;height:1.0px;background:#dde1e7;"></div>
<div class="a" style="left:56.0px;top:519.5px;width:429.0px;height:0.8px;background:#f0f1f4;"></div>
<div class="a" style="left:56.0px;top:531.1px;width:429.0px;height:0.8px;background:#f0f1f4;"></div>
<div class="a" style="left:56.0px;top:531.0px;width:6.0px;height:1.0px;background:#dde1e7;"></div>
<div class="a" style="left:56.5px;top:124.0px;width:442.5px;height:22.4px;background:#f8f9fb;border:1px solid #e3e6ea;border-radius:5px;"></div>
<div class="t" style="left:69.0px;top:130.6px;font-size:10.3px;font-weight:bold;color:#374151;">Kenji Tanaka</div>
<div class="a" style="left:56.5px;top:206.6px;width:442.5px;height:20.9px;background:#f8f9fb;border:1px solid #e3e6ea;border-radius:5px;"></div>
<div class="t" style="left:69.0px;top:213.2px;font-size:10.3px;font-weight:bold;color:#374151;">Chloe Davis</div>
<div class="a" style="left:56.5px;top:288.0px;width:442.5px;height:21.0px;background:#f8f9fb;border:1px solid #e3e6ea;border-radius:5px;"></div>
<div class="t" style="left:69.0px;top:294.6px;font-size:10.3px;font-weight:bold;color:#374151;">Gabriel Rodriguez</div>
<div class="a" style="left:56.5px;top:462.8px;width:442.5px;height:21.9px;background:#f8f9fb;border:1px solid #e3e6ea;border-radius:5px;"></div>
<div class="t" style="left:69.0px;top:469.4px;font-size:10.3px;font-weight:bold;color:#374151;">John Smith</div>
<div class="a" style="left:58.0px;top:532.5px;width:83.0px;height:12.5px;border:1px solid #f4d98a;border-radius:5px;"></div>
<div class="a" style="left:145.0px;top:532.5px;width:83.0px;height:12.5px;border:1px solid #bcd0f5;border-radius:5px;"></div>
<div class="a" style="left:232.0px;top:532.5px;width:83.0px;height:12.5px;border:1px solid #bcd0f5;border-radius:5px;"></div>
<div class="a" style="left:319.0px;top:532.5px;width:83.0px;height:12.5px;border:1px solid #bcd0f5;border-radius:5px;"></div>
</div>
<div class="t" style="left:1705.5px;top:948.7px;font-size:34px;font-weight:bold;color:#0a0a0a;letter-spacing:-0.81px;">Visulaise Daily Flow at a Glance</div>
<div class="t" style="left:1705.5px;top:1001.7px;font-size:34px;font-weight:bold;color:#0a0a0a;letter-spacing:-0.32px;">In Timeline View</div>
<div class="t" style="left:1705.5px;top:1108.7px;font-size:33.2px;font-weight:normal;color:#111;">Instantly spot continues timeline</div>
<div class="t" style="left:1705.5px;top:1156.7px;font-size:33.2px;font-weight:normal;color:#111;">scheduled appointment to identify</div>
<div class="t" style="left:1705.5px;top:1204.7px;font-size:33.2px;font-weight:normal;color:#111;">patients.</div>
<div class="t" style="left:1705.5px;top:1285.9px;font-size:33.2px;font-weight:normal;color:#111;">Key Benefits here is to save time</div>
<div class="t" style="left:1705.5px;top:1333.9px;font-size:33.2px;font-weight:normal;color:#111;">to not go to a specific screen to</div>
<div class="t" style="left:1705.5px;top:1381.9px;font-size:33.2px;font-weight:normal;color:#111;">look for individual appointment.</div>
</body></html>
